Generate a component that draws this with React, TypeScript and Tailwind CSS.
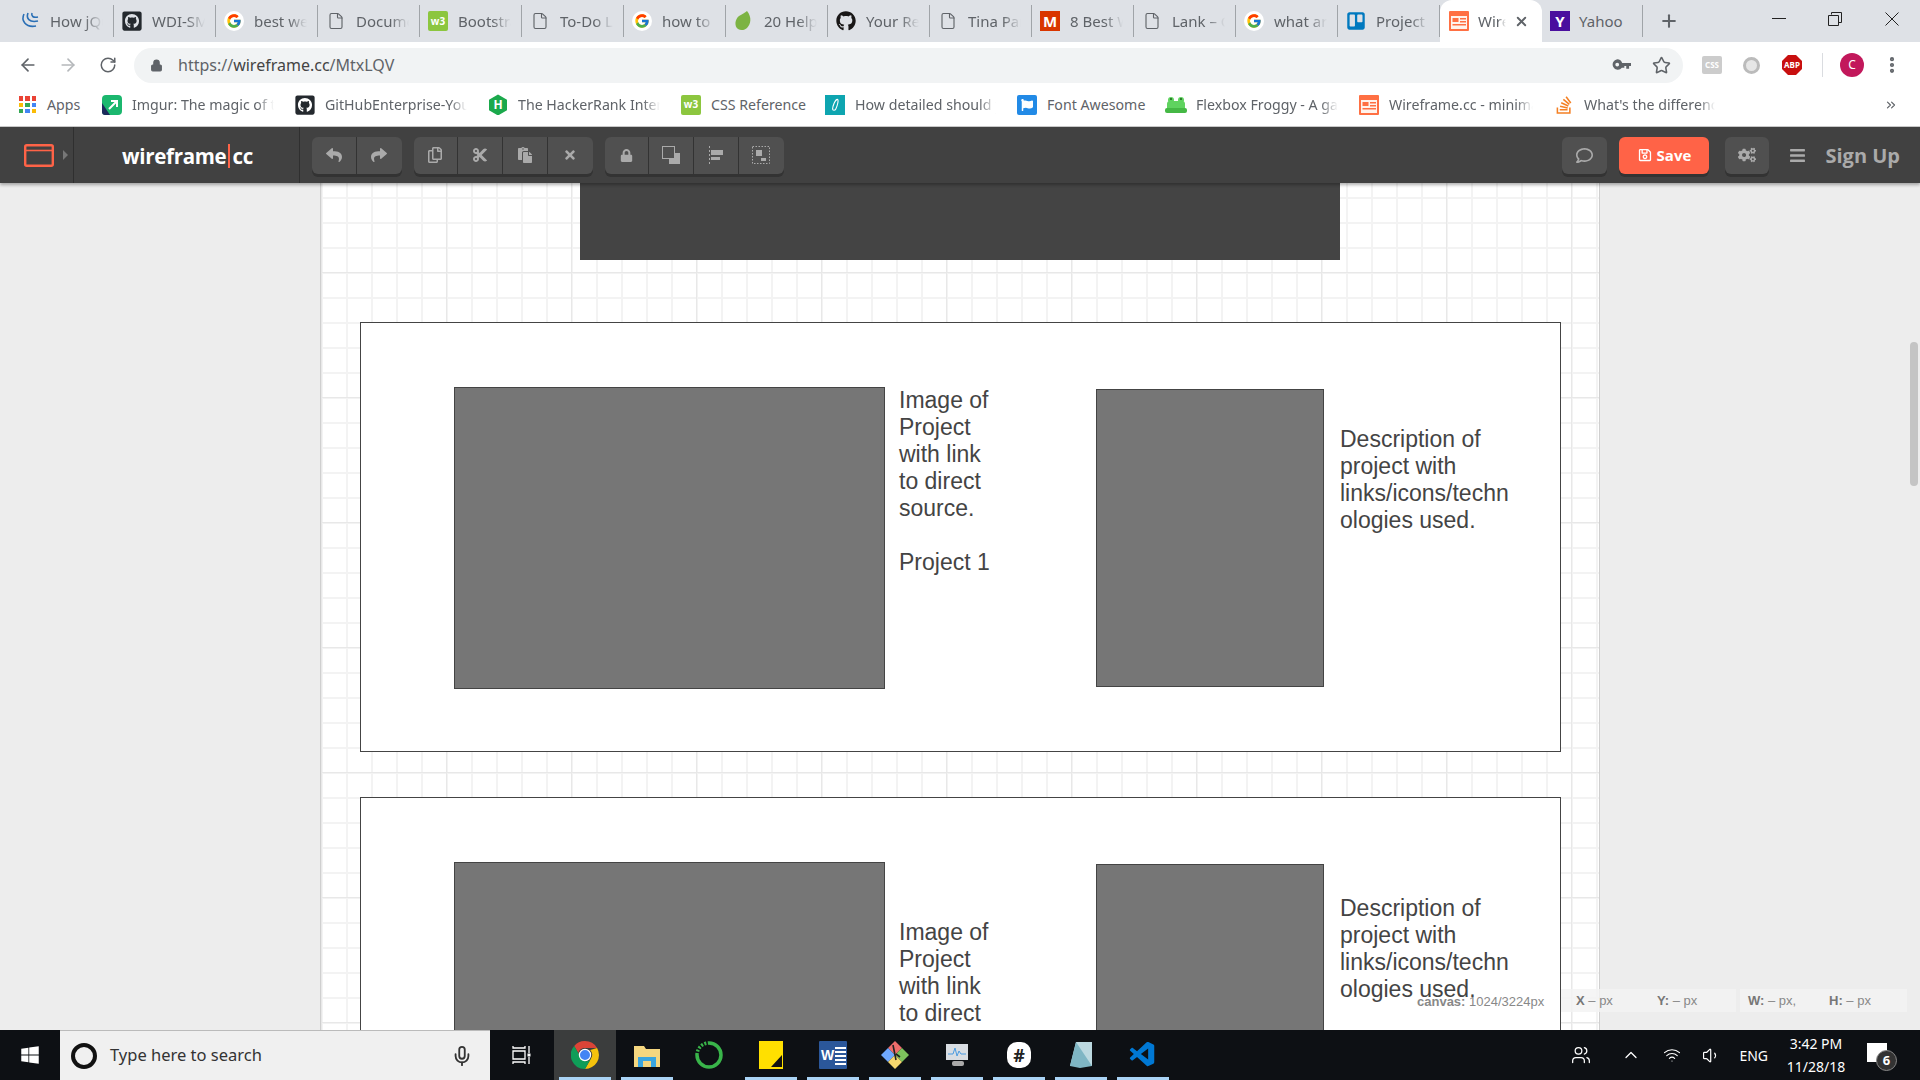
import React from "react";
import { FcGoogle } from "react-icons/fc";
import {
  FaBars, FaCogs, FaCut, FaFlag, FaGithub, FaGithubSquare, FaLock, FaPaste, FaRegComment,
  FaRegCopy, FaRegSave, FaReply, FaShare, FaStackOverflow, FaTimes, FaTrello, FaWindows,
} from "react-icons/fa";
import { VscVscode } from "react-icons/vsc";
import {
  ArrowLeft, ArrowRight, ChevronsRight, ChevronUp, EllipsisVertical, File, Lock, Mic, Plus, RotateCw,
  Star, Users, Volume1, Wifi, X,
} from "lucide-react";

const ui = "font-['Noto_Sans','Open_Sans',sans-serif]";

function Doc() {
  return <File className="h-[20px] w-[18px] text-[#5f6368]" strokeWidth={1.5} />;
}

function Google() {
  return (
    <span className="flex h-[20px] w-[20px] items-center justify-center rounded-full bg-white">
      <FcGoogle className="h-[16px] w-[16px]" />
    </span>
  );
}

function GithubBox() {
  return <FaGithubSquare className="h-[22px] w-[22px] text-[#24292e]" />;
}

function W3() {
  return (
    <span className="flex h-[20px] w-[20px] items-center justify-center rounded-[2px] bg-[#8cc63f] text-[10px] font-bold text-white">
      w3
    </span>
  );
}

function JQuery() {
  return (
    <svg viewBox="0 0 20 20" className="h-[20px] w-[20px]" fill="none" stroke="#2a6fb5" strokeWidth="1.6">
      <path d="M4 3c-3 6 1 14 12 12" />
      <path d="M8 2c-2 5 1 10 10 8" />
      <path d="M12 2c-1 3 1 5 6 4" />
    </svg>
  );
}

function WireIcon() {
  return (
    <svg viewBox="0 0 20 20" className="h-[20px] w-[20px]">
      <rect width="20" height="20" rx="1" fill="#ff7043" />
      <rect x="2" y="5" width="16" height="13" fill="#fff3ec" />
      <rect x="3.5" y="7" width="6" height="4" fill="#ff7043" />
      <rect x="11" y="7" width="6" height="1.5" fill="#ff7043" />
      <rect x="11" y="10" width="6" height="1.5" fill="#ff7043" />
      <rect x="3.5" y="13" width="13.5" height="1.5" fill="#ff7043" />
    </svg>
  );
}

const tabs: { title: string; icon: React.ReactNode }[] = [
  { title: "How jQuery", icon: <JQuery /> },
  { title: "WDI-SM", icon: <GithubBox /> },
  { title: "best web", icon: <Google /> },
  { title: "Document", icon: <Doc /> },
  { title: "Bootstrap", icon: <W3 /> },
  { title: "To-Do List", icon: <Doc /> },
  { title: "how to get", icon: <Google /> },
  {
    title: "20 Helpful",
    icon: (
      <svg viewBox="0 0 20 20" className="h-[22px] w-[20px]">
        <path d="M13 0c5 6 4 13 0 17-2 2-6 3-9 1C0 15 1 8 5 5c3-2 6-3 8-5z" fill="#7cb342" />
      </svg>
    ),
  },
  { title: "Your Repos", icon: <FaGithub className="h-[20px] w-[20px] text-[#191717]" /> },
  { title: "Tina Parker", icon: <Doc /> },
  {
    title: "8 Best Ways",
    icon: (
      <span className="flex h-[20px] w-[20px] items-center justify-center bg-[#d93600] text-[15px] font-bold text-white">M</span>
    ),
  },
  { title: "Lank – Cool", icon: <Doc /> },
  { title: "what are", icon: <Google /> },
  { title: "Project board", icon: <FaTrello className="h-[20px] w-[20px] text-[#0079bf]" /> },
];

const bookmarks: { title: string; width: string; full?: boolean; icon: React.ReactNode }[] = [
  {
    title: "Imgur: The magic of the",
    width: "w-[193px]",
    icon: (
      <svg viewBox="0 0 20 20" className="h-[20px] w-[20px]">
        <rect width="20" height="20" rx="4" fill="#1bb76e" />
        <path d="M0 8 8 20H3a3 3 0 0 1-3-3z" fill="#1c2a5b" />
        <path d="M7 14 14 7M9 6h6v6" stroke="#fff" strokeWidth="2" fill="none" />
      </svg>
    ),
  },
  { title: "GitHubEnterprise-Your", width: "w-[193px]", icon: <GithubBox /> },
  {
    title: "The HackerRank Interview",
    width: "w-[193px]",
    icon: (
      <span className="flex h-[21px] w-[18px] items-center justify-center bg-[#1ba94c] text-[12px] font-bold text-white [clip-path:polygon(50%_0,100%_25%,100%_75%,50%_100%,0_75%,0_25%)]">
        H
      </span>
    ),
  },
  { title: "CSS Reference", width: "w-[144px]", full: true, icon: <W3 /> },
  {
    title: "How detailed should you",
    width: "w-[192px]",
    icon: (
      <span className="flex h-[20px] w-[20px] items-center justify-center bg-[#0ea5b0]">
        <svg viewBox="0 0 20 20" className="h-[16px] w-[16px]" fill="none" stroke="#fff" strokeWidth="1.4">
          <path d="M13 3c-3 0-6 9-6 12 0 2 3 2 4 0 2-4 4-12 2-12z" />
        </svg>
      </span>
    ),
  },
  {
    title: "Font Awesome",
    width: "w-[149px]",
    full: true,
    icon: (
      <span className="flex h-[20px] w-[20px] items-center justify-center rounded-[2px] bg-[#228ae6]">
        <FaFlag className="h-[12px] w-[12px] text-white" />
      </span>
    ),
  },
  {
    title: "Flexbox Froggy - A game",
    width: "w-[193px]",
    icon: (
      <svg viewBox="0 0 22 20" className="h-[20px] w-[22px]">
        <circle cx="6" cy="5" r="3" fill="#5fd35f" />
        <circle cx="16" cy="5" r="3" fill="#5fd35f" />
        <rect x="2" y="6" width="18" height="10" rx="3" fill="#5fd35f" />
        <rect x="0" y="13" width="22" height="5" rx="2" fill="#45b845" />
        <circle cx="6" cy="4" r="1" fill="#1d5e1d" />
        <circle cx="16" cy="4" r="1" fill="#1d5e1d" />
      </svg>
    ),
  },
  { title: "Wireframe.cc - minimal", width: "w-[195px]", icon: <WireIcon /> },
  { title: "What's the difference between", width: "w-[182px]", icon: <FaStackOverflow className="h-[20px] w-[18px] text-[#f48024]" /> },
];

const appColors = ["#ea4335", "#ea4335", "#ea4335", "#fbbc05", "#34a853", "#4285f4", "#34a853", "#4285f4", "#fbbc05"];

function Tab({ title, icon }: { title: string; icon: React.ReactNode }) {
  return (
    <div className="flex h-[32px] w-[102px] shrink-0 items-center gap-[9px] border-r border-[#a0a4a8] pl-[7px] pr-[10px]">
      <span className="flex w-[22px] shrink-0 justify-center">{icon}</span>
      <span className="min-w-0 overflow-hidden whitespace-nowrap text-[15px] text-[#5f6368] [mask-image:linear-gradient(to_right,#000_65%,transparent)]">
        {title}
      </span>
    </div>
  );
}

function Bookmark({ title, width, full, icon }: { title: string; width: string; full?: boolean; icon: React.ReactNode }) {
  return (
    <div className={`flex shrink-0 items-center gap-[9px] ${full ? "" : "pr-[20px]"} ${width}`}>
      <span className="flex w-[22px] shrink-0 justify-center">{icon}</span>
      {full ? (
        <span className="whitespace-nowrap text-[14.2px] text-[#5f6368]">{title}</span>
      ) : (
        <span className="min-w-0 overflow-hidden whitespace-nowrap text-[14.2px] text-[#5f6368] [mask-image:linear-gradient(to_right,#000_88%,transparent)]">
          {title}
        </span>
      )}
    </div>
  );
}

function ToolGroup({ children }: { children: React.ReactNode }) {
  return (
    <div className="flex h-[37px] divide-x divide-[#333] rounded-md bg-[#505050] shadow-[0_3px_0_#333]">{children}</div>
  );
}

function ToolButton({ children }: { children: React.ReactNode }) {
  return <div className="flex w-[44.75px] items-center justify-center text-[#aaa]">{children}</div>;
}

function WireframeText({ lines, className }: { lines: string[]; className: string }) {
  return (
    <div className={`absolute font-['Liberation_Sans',sans-serif] text-[23px] leading-[27px] text-[#444] ${className}`}>
      {lines.map((line, i) => (
        <div key={i} className="h-[27px] whitespace-nowrap">
          {line}
        </div>
      ))}
    </div>
  );
}

function Card({ className, imageLines, imageTextTop, descTop }: { className: string; imageLines: string[]; imageTextTop: string; descTop: string }) {
  return (
    <div className={`absolute left-[39px] h-[430px] w-[1201px] border border-[#444] bg-white ${className}`}>
      <div className="absolute left-[93px] top-[64px] h-[302px] w-[431px] border border-[#444] bg-[#767676]" />
      <WireframeText lines={imageLines} className={`left-[538px] ${imageTextTop}`} />
      <div className="absolute left-[735px] top-[66px] h-[298px] w-[228px] border border-[#444] bg-[#767676]" />
      <WireframeText
        lines={["Description of", "project with", "links/icons/techn", "ologies used."]}
        className={`left-[979px] ${descTop}`}
      />
    </div>
  );
}

function TaskIcon({ children, open, active }: { children: React.ReactNode; open?: boolean; active?: boolean }) {
  return (
    <div className={`relative flex h-full w-[62px] shrink-0 items-center justify-center ${active ? "bg-[#3b3d3d]" : ""}`}>
      {children}
      {open && <span className="absolute bottom-0 left-[5px] right-[5px] h-[3px] bg-[#a9d3f5]" />}
    </div>
  );
}

export default function App() {
  return (
    <div className={`flex h-screen w-screen flex-col overflow-hidden bg-white ${ui}`}>
      {/* browser tabs */}
      <div className="flex h-[42px] shrink-0 items-end bg-[#dee1e6] pl-[12px]">
        <div className="flex h-[42px] items-center">
          {tabs.map((t) => (
            <Tab key={t.title} {...t} />
          ))}
        </div>
        <div className="flex h-[42px] w-[102px] shrink-0 items-center gap-[8px] rounded-t-xl bg-white pl-[8px]">
          <span className="flex w-[22px] shrink-0 justify-center">
            <WireIcon />
          </span>
          <span className="w-[28px] overflow-hidden whitespace-nowrap text-[15px] text-[#5f6368] [mask-image:linear-gradient(to_right,#000_70%,transparent)]">
            Wireframe
          </span>
          <X className="h-[15px] w-[15px] shrink-0 text-[#5f6368]" strokeWidth={3} />
        </div>
        <div className="flex h-[42px] items-center">
          <div className="flex h-[32px] w-[101px] items-center gap-[9px] border-r border-[#a0a4a8] pl-[8px]">
            <span className="flex h-[20px] w-[20px] items-center justify-center bg-[#4a0f9e] text-[15px] font-bold text-white">Y</span>
            <span className="text-[15px] text-[#5f6368]">Yahoo</span>
          </div>
          <Plus className="ml-[16px] h-[20px] w-[20px] text-[#5f6368]" strokeWidth={2.5} />
        </div>
        <div className="ml-auto flex h-full items-start pr-[21px] text-[#222]">
          <svg viewBox="0 0 14 14" className="mt-[11px] h-[14px] w-[14px]" fill="none" stroke="currentColor">
            <path d="M0 7.5h14" />
          </svg>
          <svg viewBox="0 0 14 14" className="ml-[42px] mt-[12px] h-[14px] w-[14px]" fill="none" stroke="currentColor">
            <path d="M3.5 2.5v-2h10v10h-3M.5 3.5h10v10H.5z" />
          </svg>
          <svg viewBox="0 0 14 14" className="ml-[43px] mt-[12px] h-[14px] w-[14px]" fill="none" stroke="currentColor">
            <path d="M.5.5l13 13M13.5.5l-13 13" />
          </svg>
        </div>
      </div>

      {/* address bar */}
      <div className="flex h-[42px] shrink-0 items-center pl-[18px] pr-[17px] pt-[4px]">
        <ArrowLeft className="h-[20px] w-[20px] text-[#5f6368]" />
        <ArrowRight className="ml-[20px] h-[20px] w-[20px] text-[#b5b8bb]" />
        <RotateCw className="ml-[21px] h-[18px] w-[18px] text-[#5f6368]" />
        <div className="ml-[17px] flex h-[35px] w-[1549px] shrink-0 items-center rounded-full bg-[#f1f3f4] pl-[16px] pr-[12px]">
          <Lock className="h-[13px] w-[13px] text-[#5f6368]" fill="#5f6368" />
          <span className="ml-[15px] text-[16px] text-[#5f6368]">
            https://<span className="text-[#444]">wireframe.cc</span>/MtxLQV
          </span>
          <svg viewBox="0 0 20 12" className="ml-auto h-[12px] w-[19px]" fill="#5f6368">
            <path d="M5.5 0a5.5 5.5 0 0 1 5.2 4H20v3h-2v3h-3V7h-2v2h-2.6A5.5 5.5 0 1 1 5.5 0zm0 3.5a2 2 0 1 0 0 4 2 2 0 0 0 0-4z" />
          </svg>
          <Star className="ml-[21px] h-[19px] w-[19px] text-[#5f6368]" />
        </div>
        <span className="ml-[19px] flex h-[18px] w-[20px] items-center justify-center rounded-[2px] bg-[#ccc] text-[8px] font-bold text-white">CSS</span>
        <span className="ml-[21px] h-[17px] w-[17px] rounded-full border-[3px] border-[#bbb] bg-[#e6e6e6]" />
        <span className="ml-[22px] flex h-[20px] w-[20px] items-center justify-center bg-[#c80f0f] text-[8px] font-bold text-white [clip-path:polygon(30%_0,70%_0,100%_30%,100%_70%,70%_100%,30%_100%,0_70%,0_30%)]">ABP</span>
        <span className="ml-[20px] h-[24px] w-px bg-[#dadce0]" />
        <span className="ml-[17px] flex h-[24px] w-[24px] items-center justify-center rounded-full bg-[#c2185b] text-[12px] text-white">C</span>
        <EllipsisVertical className="ml-[18px] h-[20px] w-[20px] text-[#5f6368]" strokeWidth={3} />
      </div>

      {/* bookmarks */}
      <div className="flex h-[43px] shrink-0 items-center border-b border-[#ccc] pl-[19px] pr-[22px]">
        <div className="flex w-[82px] shrink-0 items-center gap-[11px]">
          <div className="grid h-[17px] w-[17px] shrink-0 grid-cols-3 gap-[2px]">
            {appColors.map((c, i) => (
              <span key={i} style={{ backgroundColor: c }} />
            ))}
          </div>
          <span className="text-[14.2px] text-[#5f6368]">Apps</span>
        </div>
        {bookmarks.map((b) => (
          <Bookmark key={b.title} {...b} />
        ))}
        <ChevronsRight className="ml-auto h-[14px] w-[14px] text-[#5f6368]" />
      </div>

      {/* wireframe.cc toolbar */}
      <div className="relative z-10 flex h-[56px] shrink-0 items-center bg-[#414141] shadow-[0_2px_3px_rgba(0,0,0,0.3)]">
        <div className="flex h-full w-[74px] shrink-0 items-center border-r border-[#2f2f2f] pl-[24px]">
          <svg viewBox="0 0 30 23" className="h-[23px] w-[30px]" fill="none" stroke="#ff6347" strokeWidth="2.4">
            <rect x="1.2" y="1.2" width="27.6" height="20.6" rx="1.5" />
            <path d="M1.2 6.5h27.6" strokeWidth="1.6" />
          </svg>
          <span className="ml-[9px] h-0 w-0 border-y-[5px] border-l-[5px] border-y-transparent border-l-[#777]" />
        </div>
        <div className="flex h-full w-[226px] shrink-0 items-center border-r border-[#2f2f2f] pl-[48px] pt-[2px] font-['Open_Sans',sans-serif] text-[20.5px] font-bold tracking-[-0.3px] text-white">
          wireframe<span className="mx-[2px] h-[24px] w-[2px] bg-[#ff6347]" />cc
        </div>
        <div className="ml-[12px] flex gap-[12px]">
          <ToolGroup>
            <ToolButton><FaReply className="h-[16px] w-[16px]" /></ToolButton>
            <ToolButton><FaShare className="h-[16px] w-[16px]" /></ToolButton>
          </ToolGroup>
          <ToolGroup>
            <ToolButton><FaRegCopy className="h-[16px] w-[16px]" /></ToolButton>
            <ToolButton><FaCut className="h-[16px] w-[16px]" /></ToolButton>
            <ToolButton><FaPaste className="h-[16px] w-[16px]" /></ToolButton>
            <ToolButton><FaTimes className="h-[14px] w-[14px]" /></ToolButton>
          </ToolGroup>
          <ToolGroup>
            <ToolButton><FaLock className="h-[13px] w-[13px]" /></ToolButton>
            <ToolButton>
              <svg viewBox="0 0 18 18" className="h-[18px] w-[18px]">
                <path d="M7 7h11v11H7z" fill="#aaa" />
                <rect x="0.5" y="0.5" width="12" height="12" fill="#505050" stroke="#aaa" />
              </svg>
            </ToolButton>
            <ToolButton>
              <svg viewBox="0 0 14 18" className="h-[18px] w-[14px]" fill="#aaa">
                <path d="M0 0h1v2H0zM0 4h1v2H0zM0 8h1v2H0zM0 12h1v2H0zM0 16h1v2H0z" />
                <rect x="2" y="4" width="12" height="5" />
                <rect x="2" y="11" width="9" height="3" />
              </svg>
            </ToolButton>
            <ToolButton>
              <svg viewBox="0 0 18 18" className="h-[18px] w-[18px]" fill="#aaa">
                <rect x="0.5" y="0.5" width="17" height="17" fill="none" stroke="#aaa" strokeDasharray="1.5 1.5" />
                <rect x="4" y="4" width="6" height="6" />
                <rect x="9" y="12" width="5" height="3" />
              </svg>
            </ToolButton>
          </ToolGroup>
        </div>
        <div className="ml-auto flex items-center pr-[20px]">
          <div className="flex h-[37px] w-[45px] items-center justify-center rounded-md bg-[#505050] text-[#aaa] shadow-[0_3px_0_#333]">
            <FaRegComment className="h-[17px] w-[17px]" />
          </div>
          <div className="ml-[12px] flex h-[37px] w-[90px] items-center justify-center gap-[5px] rounded-md bg-[#ff6347] font-['Open_Sans',sans-serif] text-[15px] font-bold text-white shadow-[0_3px_0_#333]">
            <FaRegSave className="h-[14px] w-[14px]" />
            Save
          </div>
          <div className="ml-[16px] flex h-[37px] w-[44px] items-center justify-center rounded-md bg-[#505050] text-[#aaa] shadow-[0_3px_0_#333]">
            <FaCogs className="h-[18px] w-[18px]" />
          </div>
          <FaBars className="ml-[20px] h-[17px] w-[17px] text-[#aaa]" />
          <span className="ml-[19px] pt-[2px] font-['Open_Sans',sans-serif] text-[20px] font-bold text-[#aaa]">Sign Up</span>
        </div>
      </div>

      {/* editor */}
      <div className="relative flex min-h-0 flex-1 bg-[#ededed]">
        <div className="w-[320px] shrink-0" />
        <div className="relative h-full w-[1280px] shrink-0 overflow-hidden border-x border-[#cfcfcf] bg-white bg-[linear-gradient(to_right,#e8e8e8_1px,transparent_1px),linear-gradient(to_bottom,#e8e8e8_1px,transparent_1px),linear-gradient(to_right,#f3f3f3_2px,transparent_2px),linear-gradient(to_bottom,#f3f3f3_2px,transparent_2px)] bg-[size:125px_125px,125px_125px,25px_25px,25px_25px] bg-[position:0_89px,0_89px,0_14px,0_14px]">
          <div className="absolute left-[259px] top-0 h-[77px] w-[760px] bg-[#444]" />
          <Card
            className="top-[139px]"
            imageLines={["Image of", "Project", "with link", "to direct", "source.", "", "Project 1"]}
            imageTextTop="top-[64px]"
            descTop="top-[103px]"
          />
          <Card
            className="top-[614px]"
            imageLines={["Image of", "Project", "with link", "to direct", "source."]}
            imageTextTop="top-[121px]"
            descTop="top-[97px]"
          />
        </div>
        <div className="absolute right-[2px] top-[159px] h-[144px] w-[8px] rounded-full bg-[#c4c4c4]" />

        {/* status overlay */}
        <span className="absolute left-[1417px] top-[809px] whitespace-nowrap font-['Liberation_Sans',sans-serif] text-[13px] text-[#888]">
          <b>canvas:</b> 1024/3224px
        </span>
        <div className="absolute left-[1561px] top-[806px] flex h-[23px] w-[175px] items-center bg-[#f2f2f2]/80 pl-[15px] font-['Liberation_Sans',sans-serif] text-[13px] text-[#888]">
          <span className="w-[81px]"><b className="text-[#777]">X</b> – px</span>
          <span><b className="text-[#777]">Y:</b> – px</span>
        </div>
        <div className="absolute left-[1740px] top-[806px] flex h-[23px] w-[167px] items-center bg-[#f2f2f2]/80 pl-[8px] font-['Liberation_Sans',sans-serif] text-[13px] text-[#888]">
          <span className="w-[81px]"><b className="text-[#777]">W:</b> – px,</span>
          <span><b className="text-[#777]">H:</b> – px</span>
        </div>
      </div>

      {/* windows taskbar */}
      <div className="flex h-[50px] shrink-0 items-center bg-[#0d1014] text-white">
        <div className="flex h-full w-[60px] shrink-0 items-center justify-center">
          <FaWindows className="h-[20px] w-[20px]" />
        </div>
        <div className="flex h-full w-[430px] shrink-0 items-center border-t border-[#bbb] bg-[#f0f0f0] pl-[11px] pr-[17px] text-[#333]">
          <span className="h-[26px] w-[26px] rounded-full border-[4px] border-[#111]" />
          <span className="ml-[13px] text-[16.5px]">Type here to search</span>
          <Mic className="ml-auto h-[22px] w-[22px] text-[#333]" />
        </div>
        <div className="flex w-[64px] shrink-0 justify-center">
          <svg viewBox="0 0 20 20" className="h-[20px] w-[20px]" fill="none" stroke="#fff" strokeWidth="1.3">
            <path d="M1 1v2h12V1M1 19v-2h12v2M1 6h12v8H1zM17 1v7M17 12v7" />
            <rect x="15.5" y="8.5" width="3" height="3" fill="#fff" stroke="none" />
          </svg>
        </div>
        <TaskIcon open active>
          <svg viewBox="0 0 28 28" className="h-[28px] w-[28px]">
            <path d="M14 0a14 14 0 0 1 12.1 7H14a7 7 0 0 0-6.7 5L3.2 4.9A14 14 0 0 1 14 0z" fill="#db4437" />
            <path d="M26.1 7A14 14 0 0 1 14 28l6-10.5A7 7 0 0 0 19.2 9z" fill="#f4c20d" />
            <path d="M3.2 4.9 9 15a6 6 0 0 0 11 2.5L14 28A14 14 0 0 1 3.2 4.9z" fill="#0f9d58" />
            <circle cx="14" cy="14" r="5.6" fill="#4285f4" stroke="#fff" strokeWidth="1.2" />
          </svg>
        </TaskIcon>
        <TaskIcon open>
          <svg viewBox="0 0 26 24" className="h-[24px] w-[26px]">
            <path d="M0 3h10l2 3h14v18H0z" fill="#f5d77f" />
            <rect x="4" y="14" width="18" height="10" fill="#3aa6e0" />
            <rect x="9" y="18" width="8" height="6" fill="#f5d77f" />
          </svg>
        </TaskIcon>
        <TaskIcon>
          <svg viewBox="0 0 30 30" className="h-[30px] w-[30px]" fill="none" stroke="#39b54a" strokeWidth="3.5">
            <path d="M15 3a12 12 0 1 1-12 12" />
            <path d="M3 15A12 12 0 0 1 15 3" strokeDasharray="2 1.5" />
          </svg>
        </TaskIcon>
        <TaskIcon open>
          <svg viewBox="0 0 24 28" className="h-[28px] w-[24px]">
            <rect width="24" height="28" fill="#ffe000" />
            <path d="M12 26 23 14v12z" fill="#111" />
          </svg>
        </TaskIcon>
        <TaskIcon open>
          <span className="flex h-[28px] w-[28px] items-center rounded-[1px] bg-[#2b579a] pl-[2px] font-['Liberation_Sans',sans-serif] text-[14px] font-bold text-white">
            W
            <span className="ml-[1px] h-[20px] w-[11px] bg-white bg-[repeating-linear-gradient(to_bottom,#2b579a_0,#2b579a_2px,#fff_2px,#fff_4px)]" />
          </span>
        </TaskIcon>
        <TaskIcon open>
          <svg viewBox="0 0 30 30" className="h-[30px] w-[30px]">
            <path d="M15 1 22 8 15 15 8 8z" fill="#ef6c6c" />
            <path d="M22 8 29 15 22 22 15 15z" fill="#7cc35d" />
            <path d="M8 8 15 15 8 22 1 15z" fill="#6ea8fe" />
            <path d="M15 15 22 22 15 29 8 22z" fill="#f5d76e" />
            <path d="M13 5 16 20M16 14l4 3" stroke="#222" strokeWidth="1.6" />
          </svg>
        </TaskIcon>
        <TaskIcon open>
          <svg viewBox="0 0 28 28" className="h-[28px] w-[28px]">
            <rect x="3" y="3" width="22" height="16" fill="#d8dde2" />
            <path d="M5 13h5l2-6 2 8 2-5 2 3h5" stroke="#4a9be0" fill="none" />
            <rect x="9" y="20" width="12" height="5" rx="2" fill="#aaa" />
          </svg>
        </TaskIcon>
        <TaskIcon open>
          <span className="flex h-[26px] w-[24px] items-center justify-center rounded-[10px] bg-white text-[18px] font-bold text-[#222]">#</span>
        </TaskIcon>
        <TaskIcon open>
          <svg viewBox="0 0 26 30" className="h-[30px] w-[26px]">
            <path d="M8 2h16v24H2z" fill="#bcd9e0" />
            <path d="M8 2 2 26l10 2 12-2" fill="#7fb6c4" />
          </svg>
        </TaskIcon>
        <TaskIcon open>
          <VscVscode className="h-[30px] w-[30px] text-[#0078d4]" />
        </TaskIcon>

        <div className="ml-auto flex h-full items-center pr-[23px]">
          <Users className="h-[20px] w-[20px]" strokeWidth={1.5} />
          <ChevronUp className="ml-[30px] h-[20px] w-[20px]" strokeWidth={1.5} />
          <Wifi className="ml-[22px] h-[18px] w-[18px]" strokeWidth={1.5} />
          <Volume1 className="ml-[21px] h-[19px] w-[19px]" strokeWidth={1.5} />
          <span className="ml-[18px] text-[14px]">ENG</span>
          <div className="ml-[18px] flex w-[60px] flex-col items-center text-[14px] leading-[23px]">
            <span className="whitespace-nowrap">3:42 PM</span>
            <span className="whitespace-nowrap">11/28/18</span>
          </div>
          <div className="relative ml-[21px] h-[30px] w-[30px]">
            <span className="absolute left-0 top-[3px] h-[19px] w-[20px] bg-white" />
            <span className="absolute bottom-[-1px] right-0 flex h-[21px] w-[21px] items-center justify-center rounded-full border border-[#888] bg-[#333] text-[13px] font-bold">6</span>
          </div>
        </div>
      </div>
    </div>
  );
}
